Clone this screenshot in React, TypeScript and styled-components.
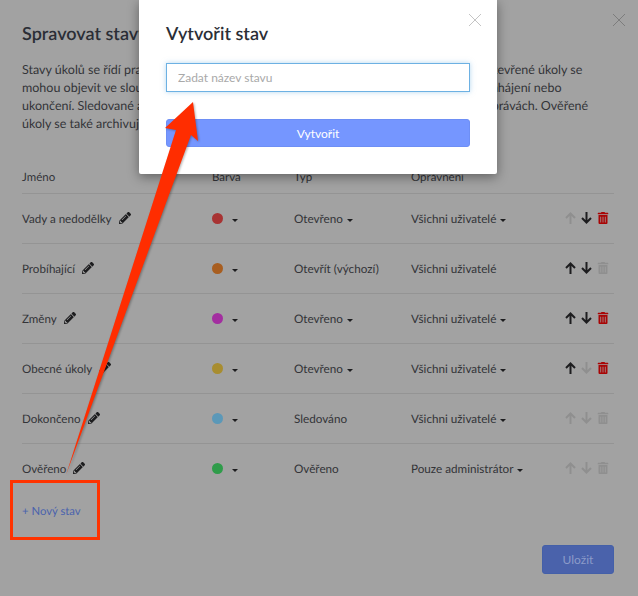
import styled, { createGlobalStyle } from 'styled-components';
import { FaPencilAlt, FaTrashAlt } from 'react-icons/fa';

const statuses = [
  { name: 'Vady a nedodělky', color: '#a83333', type: 'Otevřeno', typeMenu: true, access: 'Všichni uživatelé', accessMenu: true, up: false, down: true, del: true },
  { name: 'Probíhající', color: '#a85e20', type: 'Otevřít (výchozí)', typeMenu: false, access: 'Všichni uživatelé', accessMenu: false, up: true, down: true, del: false },
  { name: 'Změny', color: '#a32ea0', type: 'Otevřeno', typeMenu: true, access: 'Všichni uživatelé', accessMenu: true, up: true, down: true, del: true },
  { name: 'Obecné úkoly', color: '#a88d30', type: 'Otevřeno', typeMenu: true, access: 'Všichni uživatelé', accessMenu: true, up: true, down: false, del: true },
  { name: 'Dokončeno', color: '#5b98b8', type: 'Sledováno', typeMenu: false, access: 'Všichni uživatelé', accessMenu: true, up: false, down: false, del: false },
  { name: 'Ověřeno', color: '#2f9c4a', type: 'Ověřeno', typeMenu: false, access: 'Pouze administrátor', accessMenu: true, up: false, down: false, del: false },
];

const ArrowUp = () => (
  <svg width="11" height="12" viewBox="0 0 11 12" fill="none" stroke="currentColor" strokeWidth="2">
    <path d="M5.5 12V1.5M1 6l4.5-4.5L10 6" />
  </svg>
);

const ArrowDown = () => (
  <svg width="11" height="12" viewBox="0 0 11 12" fill="none" stroke="currentColor" strokeWidth="2">
    <path d="M5.5 0v10.5M1 6l4.5 4.5L10 6" />
  </svg>
);

const App = () => {
  return (
    <>
      <GlobalStyle />
      <Page>
        <CloseIcon $dim />
        <Title>Spravovat stavy</Title>
        <Intro>
          <IntroLine><span>Stavy úkolů se řídí pravidly</span><span>otevřené úkoly se</span></IntroLine>
          <IntroLine><span>mohou objevit ve sloupcích</span><span>zahájení nebo</span></IntroLine>
          <IntroLine><span>ukončení. Sledované a ověřené</span><span>zprávách. Ověřené</span></IntroLine>
          <IntroLine><span>úkoly se také archivují</span></IntroLine>
        </Intro>
        <HeaderRow>
          <span>Jméno</span>
          <span>Barva</span>
          <span>Typ</span>
          <span>Oprávnění</span>
        </HeaderRow>
        {statuses.map((item) => (
          <Row key={item.name}>
            <NameCell>
              {item.name}
              <FaPencilAlt size={12} />
            </NameCell>
            <ColorCell>
              <Dot $color={item.color} />
              <Caret />
            </ColorCell>
            <MenuCell>
              {item.type}
              {item.typeMenu && <Caret />}
            </MenuCell>
            <MenuCell>
              {item.access}
              {item.accessMenu && <Caret />}
            </MenuCell>
            <Actions>
              <MoveIcon $on={item.up}><ArrowUp /></MoveIcon>
              <MoveIcon $on={item.down}><ArrowDown /></MoveIcon>
              <DeleteIcon $on={item.del}><FaTrashAlt size={12} /></DeleteIcon>
            </Actions>
          </Row>
        ))}
        <AddLink>+ Nový stav</AddLink>
        <Footer>
          <SaveButton>Uložit</SaveButton>
        </Footer>
      </Page>

      <Dialog>
        <CloseIcon />
        <DialogTitle>Vytvořit stav</DialogTitle>
        <NameInput placeholder="Zadat název stavu" />
        <CreateButton>Vytvořit</CreateButton>
      </Dialog>

      <Highlight />
      <Arrow viewBox="0 0 638 596">
        <polygon points="193,102 198,141 191,135 66,475 176,130 165,128" fill="#ff2d00" />
      </Arrow>
    </>
  );
};

export default App;

const GlobalStyle = createGlobalStyle`
  html, body {
    margin: 0;
    padding: 0;
    background: #a2a2a2;
    text-rendering: geometricPrecision;
  }
  * {
    box-sizing: border-box;
  }
`;

const Page = styled.div`
  width: 638px;
  height: 596px;
  overflow: hidden;
  position: relative;
  padding: 21px 24px 0 22px;
  background: #a2a2a2;
  color: #333438;
  font-family: Lato, "Liberation Sans", sans-serif;
  font-size: 11.7px;
`;

const CloseIcon = styled.div<{ $dim?: boolean }>`
  position: absolute;
  top: 14px;
  right: ${(p) => (p.$dim ? '13px' : '16px')};
  width: 12px;
  height: 12px;
  background:
    linear-gradient(45deg, transparent 47%, ${(p) => (p.$dim ? '#7d7d7d' : '#c4c4c4')} 47%, ${(p) => (p.$dim ? '#7d7d7d' : '#c4c4c4')} 53%, transparent 53%),
    linear-gradient(-45deg, transparent 47%, ${(p) => (p.$dim ? '#7d7d7d' : '#c4c4c4')} 47%, ${(p) => (p.$dim ? '#7d7d7d' : '#c4c4c4')} 53%, transparent 53%);
`;

const Title = styled.h1`
  margin: 0;
  font-size: 18px;
  line-height: 24px;
  font-weight: 600;
  color: #2b2e36;
`;

const Intro = styled.div`
  margin-top: 16px;
  font-size: 12.5px;
  line-height: 18px;
`;

const IntroLine = styled.div`
  display: grid;
  grid-template-columns: 464px 1fr;
  white-space: nowrap;
`;

const columns = `190px 82px 117px 1fr`;

const HeaderRow = styled.div`
  display: grid;
  grid-template-columns: ${columns};
  align-items: center;
  height: 38px;
  margin-top: 22px;
  padding-top: 6px;
  font-size: 11.5px;
`;

const Row = styled.div`
  display: grid;
  grid-template-columns: ${columns} auto;
  align-items: center;
  height: 50px;
  border-top: 1px solid #949494;
  padding-top: 1px;
`;

const NameCell = styled.div`
  display: flex;
  align-items: center;
  gap: 7px;
  font-size: 11.6px;
  color: #333438;

  svg {
    color: #1d1d1f;
    margin-top: -2px;
  }
`;

const ColorCell = styled.div`
  display: flex;
  align-items: center;
  gap: 9px;
`;

const Dot = styled.span<{ $color: string }>`
  width: 11px;
  height: 11px;
  margin-top: -2px;
  border-radius: 50%;
  background: ${(p) => p.$color};
`;

const Caret = styled.span`
  display: inline-block;
  width: 0;
  height: 0;
  margin-top: 2px;
  border-left: 3px solid transparent;
  border-right: 3px solid transparent;
  border-top: 3px solid #1d1d1f;
`;

const MenuCell = styled.div`
  display: flex;
  align-items: center;
  gap: 4px;
  white-space: nowrap;
`;

const Actions = styled.div`
  display: flex;
  align-items: center;
  gap: 5px;
  padding-right: 5px;
  margin-top: -2px;
`;

const MoveIcon = styled.span<{ $on: boolean }>`
  display: flex;
  color: ${(p) => (p.$on ? '#1d1d1f' : '#8f8f8f')};
`;

const DeleteIcon = styled.span<{ $on: boolean }>`
  display: flex;
  color: ${(p) => (p.$on ? '#a80505' : '#8f8f8f')};
`;

const AddLink = styled.div`
  margin-top: 10px;
  font-size: 11.3px;
  line-height: 18px;
  color: #4a62ad;
`;

const Footer = styled.div`
  display: flex;
  justify-content: flex-end;
  margin-top: 24px;
`;

const SaveButton = styled.button`
  width: 72px;
  height: 29px;
  padding: 0;
  border: 1px solid #4460a8;
  border-radius: 3px;
  background: #4a62ab;
  color: #8c9bc9;
  font-family: Lato, "Liberation Sans", sans-serif;
  font-size: 12px;
`;

const Dialog = styled.div`
  position: absolute;
  left: 139px;
  top: 0;
  width: 358px;
  height: 174px;
  padding: 21px 27px 0;
  background: #fff;
  border-radius: 0 0 2px 2px;
  box-shadow: 0 3px 12px rgba(0, 0, 0, 0.4);
  font-family: Lato, "Liberation Sans", sans-serif;
`;

const DialogTitle = styled.h2`
  margin: 0;
  font-size: 18px;
  line-height: 24px;
  font-weight: 600;
  color: #2b2e36;
`;

const NameInput = styled.input`
  display: block;
  width: 304px;
  height: 29px;
  margin-top: 18px;
  padding: 0 11px;
  border: 1px solid #6db1e3;
  outline: none;
  box-shadow: 0 0 5px rgba(109, 177, 227, 0.5);
  font-family: Lato, "Liberation Sans", sans-serif;
  font-size: 12px;

  &::placeholder {
    color: #a9a9a9;
    opacity: 1;
  }
`;

const CreateButton = styled.button`
  display: block;
  width: 304px;
  height: 28px;
  margin-top: 27px;
  padding: 0;
  border: 1px solid #6e8ff5;
  border-radius: 3px;
  background: #7596ff;
  color: #fff;
  font-family: Lato, "Liberation Sans", sans-serif;
  font-size: 12px;
`;

const Highlight = styled.div`
  position: absolute;
  left: 10px;
  top: 480px;
  width: 90px;
  height: 60px;
  border: 3px solid #ff3300;
`;

const Arrow = styled.svg`
  position: absolute;
  left: 0;
  top: 0;
  width: 638px;
  height: 596px;
  pointer-events: none;
  filter: drop-shadow(1px 1px 1px rgba(0, 0, 0, 0.3));
`;
